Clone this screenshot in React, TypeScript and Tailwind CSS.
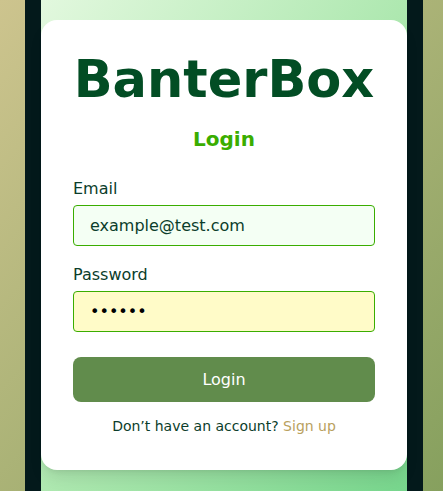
import { useState } from 'react';

export default function App() {
  const [email, setEmail] = useState('example@test.com');
  const [password, setPassword] = useState('secret');

  return (
    <div
      className="min-h-screen flex bg-gradient-to-br from-[#cdc48e] to-[#86a05e]"
      style={{ fontFamily: '"DejaVu Sans", Verdana, sans-serif' }}
    >
      {/* Dark frame */}
      <div className="ml-[25px] w-[398px] min-h-screen bg-[#03191b] px-4">
        {/* Green panel */}
        <div className="min-h-screen bg-gradient-to-br from-[#e2f8de] via-[#aee8b0] to-[#76d58c] pt-5 pb-6">
          {/* Card */}
          <div className="bg-white rounded-2xl shadow-lg px-8 pt-[34px] pb-[34px]">
            <h1 className="text-center text-[51px] leading-none font-bold text-[#024d24]">
              BanterBox
            </h1>
            <h2 className="mt-5 mb-6 text-center text-xl font-bold text-[#3aad00]">
              Login
            </h2>

            <form onSubmit={(e) => e.preventDefault()}>
              <label className="block mb-1 text-base leading-6 text-[#0b3d2b]">Email</label>
              <input
                type="email"
                value={email}
                onChange={(e) => setEmail(e.target.value)}
                className="block w-full h-[41px] px-4 mb-[17px] rounded border border-[#3aad00] bg-[#f4fff4] text-base text-[#0b3d2b] outline-none"
              />

              <label className="block mb-1 text-base leading-6 text-[#0b3d2b]">Password</label>
              <input
                type="password"
                value={password}
                onChange={(e) => setPassword(e.target.value)}
                className="block w-full h-[41px] px-4 rounded border border-[#3aad00] bg-[#fffbc8] text-base text-black outline-none"
              />

              <button
                type="submit"
                className="mt-[25px] w-full h-[45px] rounded-lg bg-[#618c4c] text-white text-base"
              >
                Login
              </button>
            </form>

            <p className="mt-[14px] text-center text-sm leading-5 text-[#0b3d2b]">
              Don’t have an account? <a href="#" className="text-[#b9a15e]">Sign up</a>
            </p>
          </div>
        </div>
      </div>
    </div>
  );
}
